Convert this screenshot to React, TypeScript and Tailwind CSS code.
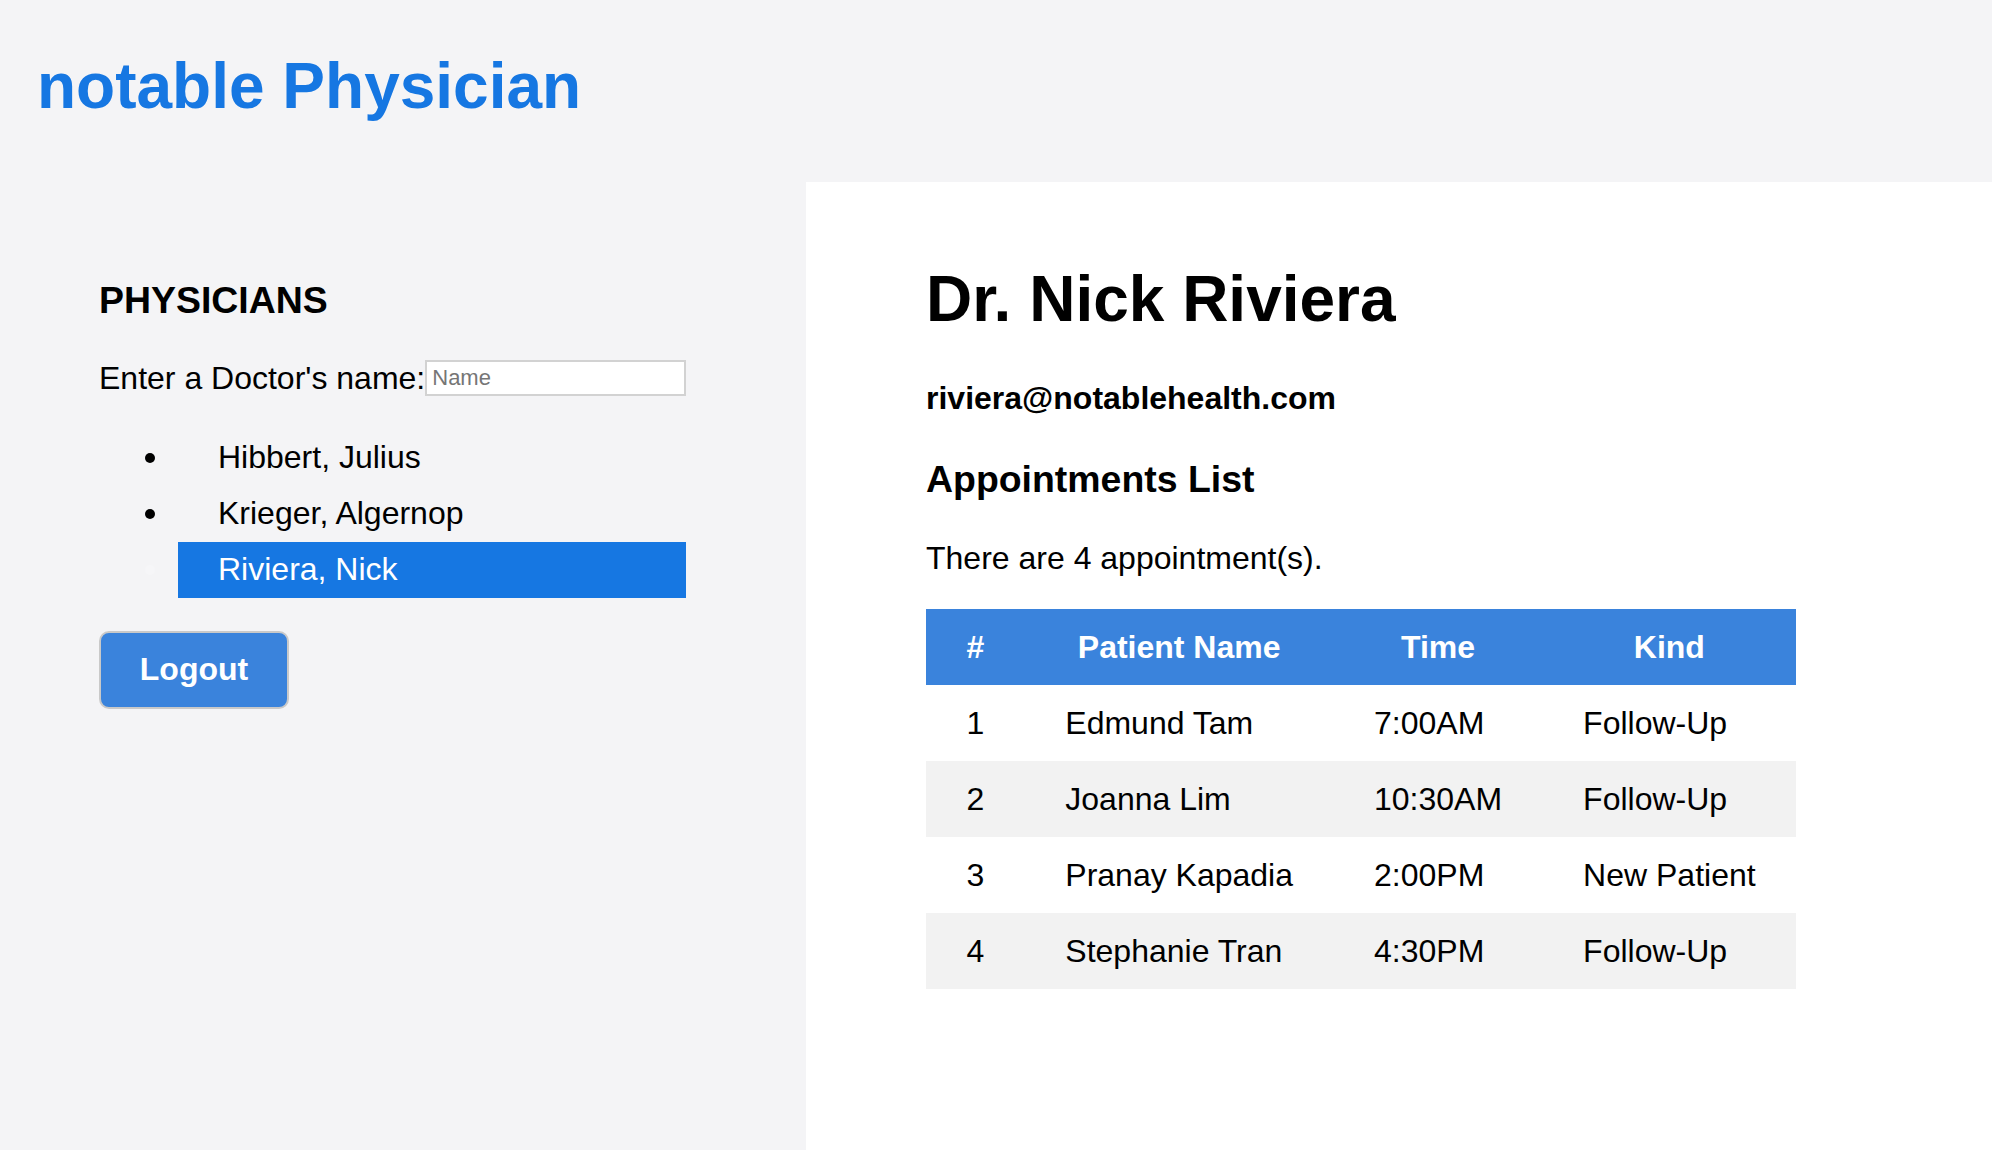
import { useState } from "react";

// Physician dashboard
const physicians = ["Hibbert, Julius", "Krieger, Algernop", "Riviera, Nick"];

const appointments = [
    { id: 1, name: "Edmund Tam", time: "7:00AM", kind: "Follow-Up" },
    { id: 2, name: "Joanna Lim", time: "10:30AM", kind: "Follow-Up" },
    { id: 3, name: "Pranay Kapadia", time: "2:00PM", kind: "New Patient" },
    { id: 4, name: "Stephanie Tran", time: "4:30PM", kind: "Follow-Up" },
];

const App = () => {
    const [selected, setSelected] = useState(2);
    const [query, setQuery] = useState("");

    return (
        <div className="min-h-screen bg-[#f4f4f6] text-black font-['Liberation_Sans',Arial,sans-serif]">
            {/* Header */}
            <div className="h-[182px] pl-[37px] pt-[50px]">
                <h1 className="text-[64px] leading-[1.15] font-bold text-[#1677e2]">notable Physician</h1>
            </div>

            <div className="flex min-h-[968px]">
                {/* Physicians list */}
                <div className="w-[806px] shrink-0 pl-[99px] pt-[97px]">
                    <h3 className="text-[37.44px] leading-[1.15] font-bold">PHYSICIANS</h3>
                    <div className="mt-[38px] flex items-center">
                        <span className="text-[32px] leading-[1.15]">Enter a Doctor's name:</span>
                        <input
                            type="text"
                            value={query}
                            onChange={(e) => setQuery(e.target.value)}
                            placeholder="Name"
                            className="w-[261px] h-[36px] bg-white border-2 border-[#d2d2d2] pl-[5px] text-[22px] text-black placeholder:text-[#767676] outline-none"
                        />
                    </div>
                    <ul className="mt-[33px]">
                        {physicians.map((doc, index) => (
                            <li key={doc} className="flex items-center h-[56px]">
                                <div className="w-[79px] shrink-0 flex items-center">
                                    <span className={`ml-[46px] w-[10px] h-[10px] rounded-full ${index === selected ? "bg-[#f6f6f8]" : "bg-black"}`} />
                                </div>
                                <button
                                    onClick={() => setSelected(index)}
                                    className={`w-[508px] h-[56px] pl-[40px] flex items-center text-left text-[32px] leading-[1.15] ${index === selected ? "bg-[#1677e2] text-white" : ""}`}
                                >
                                    {doc}
                                </button>
                            </li>
                        ))}
                    </ul>
                    <button className="mt-[33px] w-[190px] h-[78px] rounded-[10px] border-2 border-[#c9c9c9] bg-[#3a83dc] text-white text-[32px] font-bold leading-[1.15]">
                        Logout
                    </button>
                </div>

                {/* Doctor details */}
                <div className="flex-1 bg-white pl-[120px] pt-[81px]">
                    <h1 className="text-[64px] leading-[1.15] font-bold">Dr. Nick Riviera</h1>
                    <h4 className="mt-[43px] text-[32px] leading-[1.15] font-bold">riviera@notablehealth.com</h4>
                    <h3 className="mt-[42px] text-[37.44px] leading-[1.15] font-bold">Appointments List</h3>
                    <p className="mt-[39px] text-[32px] leading-[1.15]">There are {appointments.length} appointment(s).</p>
                    <table className="mt-[32px] border-collapse text-[32px] leading-[1.15]">
                        <thead>
                            <tr className="bg-[#3a83dc] text-white">
                                <th className="h-[76px] px-[40.5px] font-bold text-center">#</th>
                                <th className="h-[76px] px-[40.5px] font-bold text-center">Patient Name</th>
                                <th className="h-[76px] px-[40.5px] font-bold text-center">Time</th>
                                <th className="h-[76px] px-[40.5px] font-bold text-center">Kind</th>
                            </tr>
                        </thead>
                        <tbody>
                            {appointments.map((appt, index) => (
                                <tr key={appt.id} className={index % 2 === 1 ? "bg-[#f2f2f2]" : ""}>
                                    <td className="h-[76px] px-[40.5px]">{appt.id}</td>
                                    <td className="h-[76px] px-[40.5px]">{appt.name}</td>
                                    <td className="h-[76px] px-[40.5px]">{appt.time}</td>
                                    <td className="h-[76px] px-[40.5px]">{appt.kind}</td>
                                </tr>
                            ))}
                        </tbody>
                    </table>
                </div>
            </div>
        </div>
    );
};

export default App;
